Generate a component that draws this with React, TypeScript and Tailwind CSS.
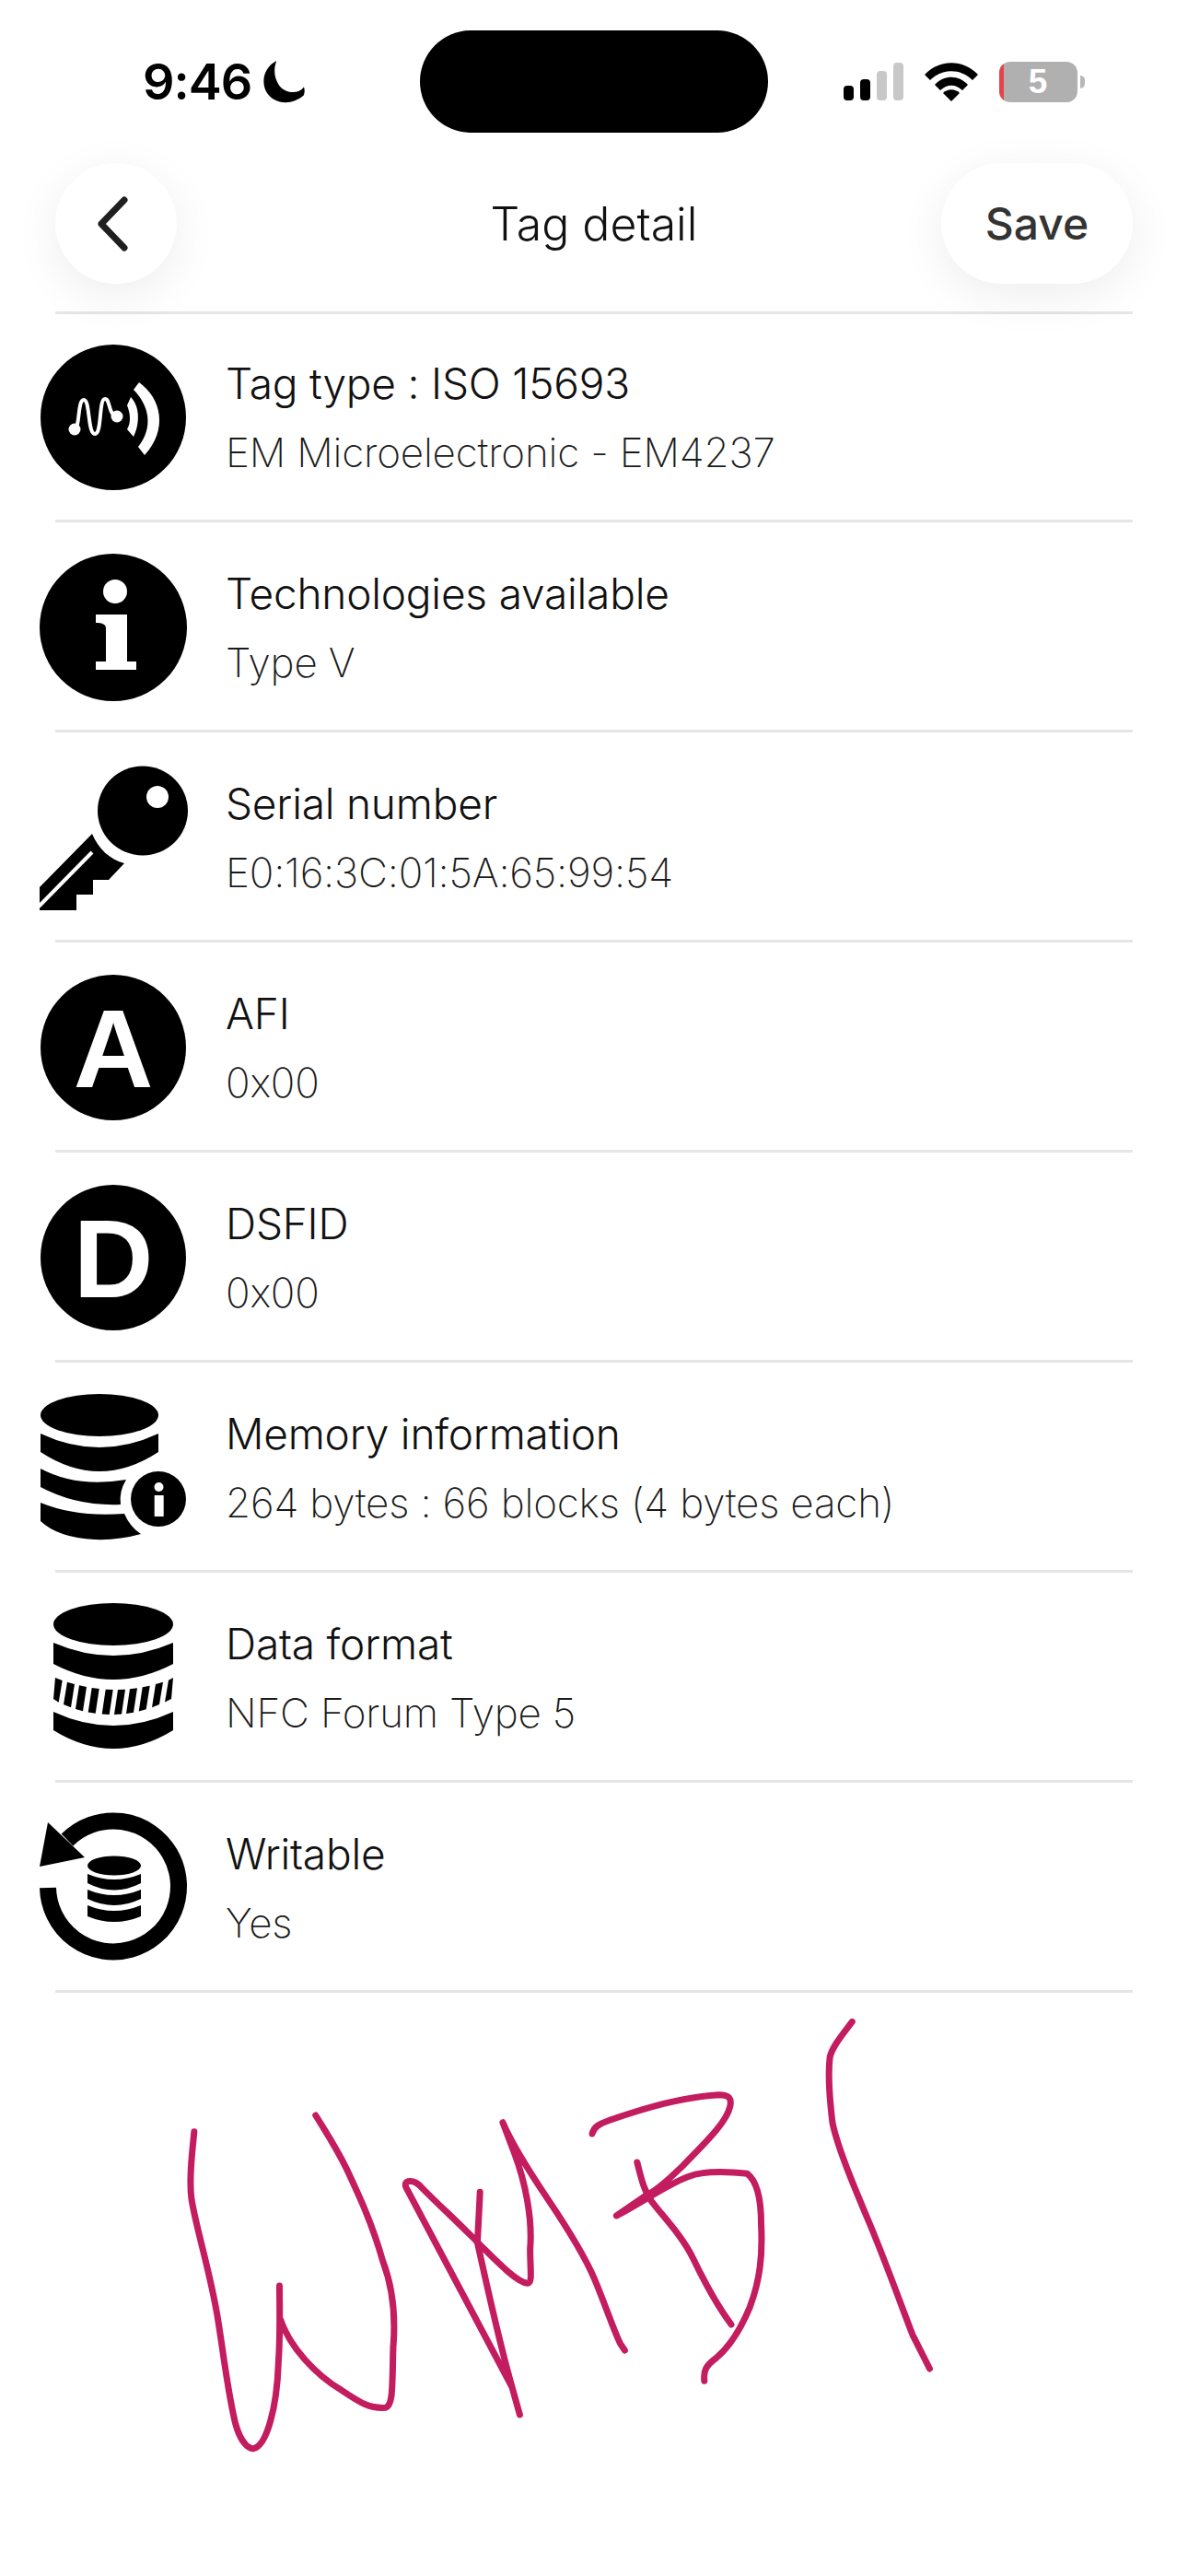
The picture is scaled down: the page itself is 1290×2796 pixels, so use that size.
import type { ReactNode } from "react";

const stripeCenters = [18.7, 32, 45, 58.7, 73.7, 87, 100, 113.7, 128, 142];
const topY = (x: number) => 81 + 13 * (1 - ((x - 80) / 65) ** 2);
const botY = (x: number) => 104 + 17 * (1 - ((x - 80) / 65) ** 2);
const stripes = stripeCenters.map((c) => {
  const l = Math.max(15, c - 4);
  const r = Math.min(145, c + 4);
  return `${l + 2},${topY(l)} ${r + 2 > 145 ? 145 : r + 2},${topY(r)} ${r - 2},${botY(r)} ${l - 2 < 15 ? 15 : l - 2},${botY(l)}`;
});

function Svg({ children }: { children: ReactNode }) {
  return (
    <svg viewBox="0 0 160 160" className="h-[160px] w-[160px] shrink-0 overflow-visible">
      {children}
    </svg>
  );
}

const WaveIcon = () => (
  <Svg>
    <circle cx="80" cy="79" r="79" fill="#000" />
    <circle cx="38" cy="92" r="6.500" fill="#fff" />
    <circle cx="84" cy="78" r="6.500" fill="#fff" />
    <path d="M38 92 C44 90 41 60 48 60 C55 60 52 97 60 97 C68 97 64 59 71 59 C77 59 74 76 84 78" fill="none" stroke="#fff" strokeWidth="4" />
    <path d="M99 57 C109 67 109 86 102 100 L95 92 C99 85 99 76 95 66 Z" fill="#fff" />
    <path d="M108 41 C132 58 140 92 114 120 L107 111 C124 90 119 66 102 49 Z" fill="#fff" />
  </Svg>
);

const InfoIcon = () => (
  <Svg>
    <circle cx="80" cy="79" r="80" fill="#000" />
    <ellipse cx="82" cy="40" rx="13" ry="13" fill="#fff" />
    <path d="M61 65 H95 V116 H105 V125 H61 V116 H72 V80 C72 75 67 74 61 74 Z" fill="#fff" />
  </Svg>
);

const KeyIcon = () => (
  <Svg>
    <ellipse cx="112" cy="50" rx="49" ry="48.500" fill="#000" />
    <circle cx="128" cy="35" r="12" fill="#fff" />
    <path d="M0 133 L57 75 C64 92 77 103 92 107 L75 125 H58 V141 H40 V158 H0 Z" fill="#000" />
    <path d="M-1 154 L57 95" stroke="#fff" strokeWidth="4" fill="none" />
  </Svg>
);

const LetterIcon = ({ letter }: { letter: string }) => (
  <Svg>
    <circle cx="80" cy="79" r="79" fill="#000" />
    <text x="80" y="122" textAnchor="middle" fill="#fff" fontSize="120" fontWeight="700" fontFamily="Liberation Sans, sans-serif">
      {letter}
    </text>
  </Svg>
);

const MemoryIcon = () => (
  <Svg>
    <g transform="translate(0 -3)">
      <ellipse cx="65" cy="25" rx="64" ry="23" fill="#000" />
      <path d="M1 45 Q65 75 129 45 V65 Q65 107 1 65 Z" fill="#000" />
      <path d="M1 83 Q40 104 94 95 Q86 108 88 122 Q40 124 1 103 Z" fill="#000" />
      <path d="M1 120 Q40 136 92 132 Q98 146 110 154 Q85 161 60 160 Q20 158 1 140 Z" fill="#000" />
      <circle cx="129" cy="116" r="30" fill="#000" />
      <circle cx="129.500" cy="103" r="5" fill="#fff" />
      <rect x="124.700" y="112" width="10" height="23" fill="#fff" />
    </g>
  </Svg>
);

const FormatIcon = () => (
  <Svg>
    <g transform="translate(0 -2)">
      <ellipse cx="80" cy="23" rx="65" ry="23" fill="#000" />
      <path d="M15 43 Q80 71 145 43 V66 Q80 100 15 66 Z" fill="#000" />
      {stripes.map((p) => (
        <polygon key={p} points={p} fill="#000" />
      ))}
      <path d="M15 118 Q80 148 145 118 V138 Q80 178 15 138 Z" fill="#000" />
    </g>
  </Svg>
);

const WritableIcon = () => (
  <Svg>
    <path d="M9 79 A71 71 0 1 0 30 27" fill="none" stroke="#000" strokeWidth="18" />
    <polygon points="9,8 49,46 0,56" fill="#000" />
    <ellipse cx="81" cy="55" rx="29" ry="10.500" fill="#000" />
    <path d="M52 64 Q81 76 110 64 V74 Q81 89 52 74 Z" fill="#000" />
    <path d="M52 81 Q81 93 110 81 V91 Q81 105 52 91 Z" fill="#000" />
    <path d="M52 98 Q81 110 110 98 V110 Q81 122 52 110 Z" fill="#000" />
  </Svg>
);

function Row({ icon, title, sub }: { icon: ReactNode; title: string; sub: string }) {
  return (
    <div>
      <div className="flex h-[225px] items-start pl-[43px] pt-[35px]">
        {icon}
        <div className="ml-[42px] flex flex-col">
          <div className="mt-[5px] text-[46px] font-[350] leading-[75px] tracking-[-0.2px] text-[#111]">{title}</div>
          <div className="text-[44px] font-extralight leading-[75px] tracking-[-0.2px] text-[#1a1a1a]">{sub}</div>
        </div>
      </div>
      <div className="mx-[60px] h-[3px] bg-[#e5e5e5]" />
    </div>
  );
}

export default function App() {
  return (
    <div className="h-[2796px] w-[1290px] overflow-hidden bg-white [font-family:Inter,sans-serif]">
      <div className="flex h-[144px] pt-[33px]">
        <div className="flex w-[456px] items-center pl-[155px]">
          <span className="text-[54px] font-semibold leading-none tracking-[-1px] text-black">9:46</span>
          <svg viewBox="0 0 42 42" className="ml-[12px] h-[46px] w-[46px]">
            <path d="M14 0 C2 6 -2 20 4 31 C11 43 29 45 41 34 C42 31 42 28 41 26 C36 33 24 33 17 25 C11 17 11 7 14 0 Z" fill="#000" />
          </svg>
        </div>
        <div className="h-[111px] w-[378px] rounded-[56px] bg-black" />
        <div className="flex flex-1 items-center pl-[82px]">
          <svg viewBox="0 0 66 41" className="h-[41px] w-[66px]">
            <rect x="0" y="25" width="11" height="16" rx="4" fill="#000" />
            <rect x="18" y="18" width="11" height="23" rx="4" fill="#000" />
            <rect x="36" y="9" width="11" height="32" rx="4" fill="#c8c8c8" />
            <rect x="54" y="0" width="11" height="41" rx="4" fill="#c8c8c8" />
          </svg>
          <svg viewBox="0 0 58 42" className="ml-[22px] h-[42px] w-[58px]">
            <path d="M0 13 C16 -4 42 -4 58 13 L52 19 C39 6 19 6 6 19 Z" fill="#000" />
            <path d="M11 24 C21 13 37 13 47 24 L41 30 C33 23 25 23 17 30 Z" fill="#000" />
            <path d="M20 33 C25 28 33 28 38 33 L29 42 Z" fill="#000" />
          </svg>
          <div className="ml-[23px] flex h-[44px] w-[85px] items-center justify-center overflow-hidden rounded-[12px] bg-[#b0b0b0] text-[37px] font-bold leading-none text-white">
            <div className="h-full w-[5px] shrink-0 bg-[#e8434a]" />
            <span className="flex-1 pr-[6px] text-center [font-family:'Liberation_Sans',sans-serif]">5</span>
          </div>
          <div className="ml-[3px] h-[14px] w-[5px] rounded-r-full bg-[#b8b8b8]" />
        </div>
      </div>

      <div className="mt-[33px] flex h-[131px] items-center px-[60px]">
        <div className="flex-1">
          <div className="flex h-[131px] w-[132px] items-center justify-center rounded-full bg-white shadow-[0_12px_50px_rgba(0,0,0,0.07)]">
            <svg viewBox="0 0 36 60" className="mr-[8px] h-[60px] w-[36px]">
              <path d="M31 4 L6 30 L31 56" fill="none" stroke="#1f1f1f" strokeWidth="7" strokeLinecap="round" strokeLinejoin="round" />
            </svg>
          </div>
        </div>
        <div className="text-[50px] font-[350] leading-none text-[#111]">Tag detail</div>
        <div className="flex flex-1 justify-end">
          <div className="flex h-[131px] w-[208px] items-center justify-center rounded-full bg-white text-[48px] font-medium leading-none text-[#333] shadow-[0_12px_50px_rgba(0,0,0,0.07)]">
            Save
          </div>
        </div>
      </div>

      <div className="mx-[60px] mt-[30px] h-[3px] bg-[#e5e5e5]" />

      <div className="-mt-[2px]">
        <Row icon={<WaveIcon />} title="Tag type : ISO 15693" sub="EM Microelectronic - EM4237" />
        <Row icon={<InfoIcon />} title="Technologies available" sub="Type V" />
        <Row icon={<KeyIcon />} title="Serial number" sub="E0:16:3C:01:5A:65:99:54" />
        <Row icon={<LetterIcon letter="A" />} title="AFI" sub="0x00" />
        <Row icon={<LetterIcon letter="D" />} title="DSFID" sub="0x00" />
        <Row icon={<MemoryIcon />} title="Memory information" sub="264 bytes : 66 blocks (4 bytes each)" />
        <Row icon={<FormatIcon />} title="Data format" sub="NFC Forum Type 5" />
        <Row icon={<WritableIcon />} title="Writable" sub="Yes" />
      </div>

      <svg viewBox="0 0 1568 1500" preserveAspectRatio="none" className="ml-[180px] mt-[18px] h-[500px] w-[880px]">
        <g fill="none" stroke="#c31c5f" strokeWidth="7" strokeLinecap="round" strokeLinejoin="round">
          <path vectorEffect="non-scaling-stroke" d="M55 398 C50 480 45 560 50 620 C60 720 85 850 100 1000 C110 1100 120 1250 135 1350 C145 1410 160 1432 170 1430 C195 1420 215 1300 218 1150 C222 1050 220 960 220 900 M222 1010 C240 1100 290 1190 340 1240 C380 1285 395 1300 425 1297 C440 1290 438 1230 440 1100 C445 1000 438 900 420 820 C400 700 375 610 350 520 C330 450 310 400 290 345" />
          <path vectorEffect="non-scaling-stroke" d="M608 595 L603 760 C615 850 640 1050 670 1230 L685 1320 L670 1230 L465 580 C458 555 480 550 495 580 C530 640 570 700 610 770 C640 820 680 890 700 892 C710 890 705 850 705 780 C710 680 695 560 675 470 L652 368 C665 420 700 520 740 620 C780 720 810 800 830 880 C850 960 870 1060 880 1090 L888 1110" />
          <path vectorEffect="non-scaling-stroke" d="M825 405 C828 385 835 375 860 360 C930 320 1000 285 1070 278 C1090 278 1095 290 1092 315 C1085 370 1040 440 1000 510 C975 550 950 590 930 605 L872 672 C920 630 970 570 1010 545 C1040 525 1090 528 1125 535 C1145 560 1152 620 1152 700 C1155 800 1150 880 1130 970 C1110 1050 1090 1100 1065 1135 C1045 1160 1040 1175 1042 1210" />
          <path vectorEffect="non-scaling-stroke" d="M912 498 C920 550 925 590 940 625 C965 680 1000 740 1020 810 C1040 880 1065 960 1094 1026" />
          <path vectorEffect="non-scaling-stroke" d="M1328 40 C1310 80 1290 120 1285 155 C1280 220 1285 300 1290 370 C1300 450 1330 570 1360 690 C1390 810 1420 950 1445 1060 L1478 1170" />
        </g>
      </svg>
    </div>
  );
}
